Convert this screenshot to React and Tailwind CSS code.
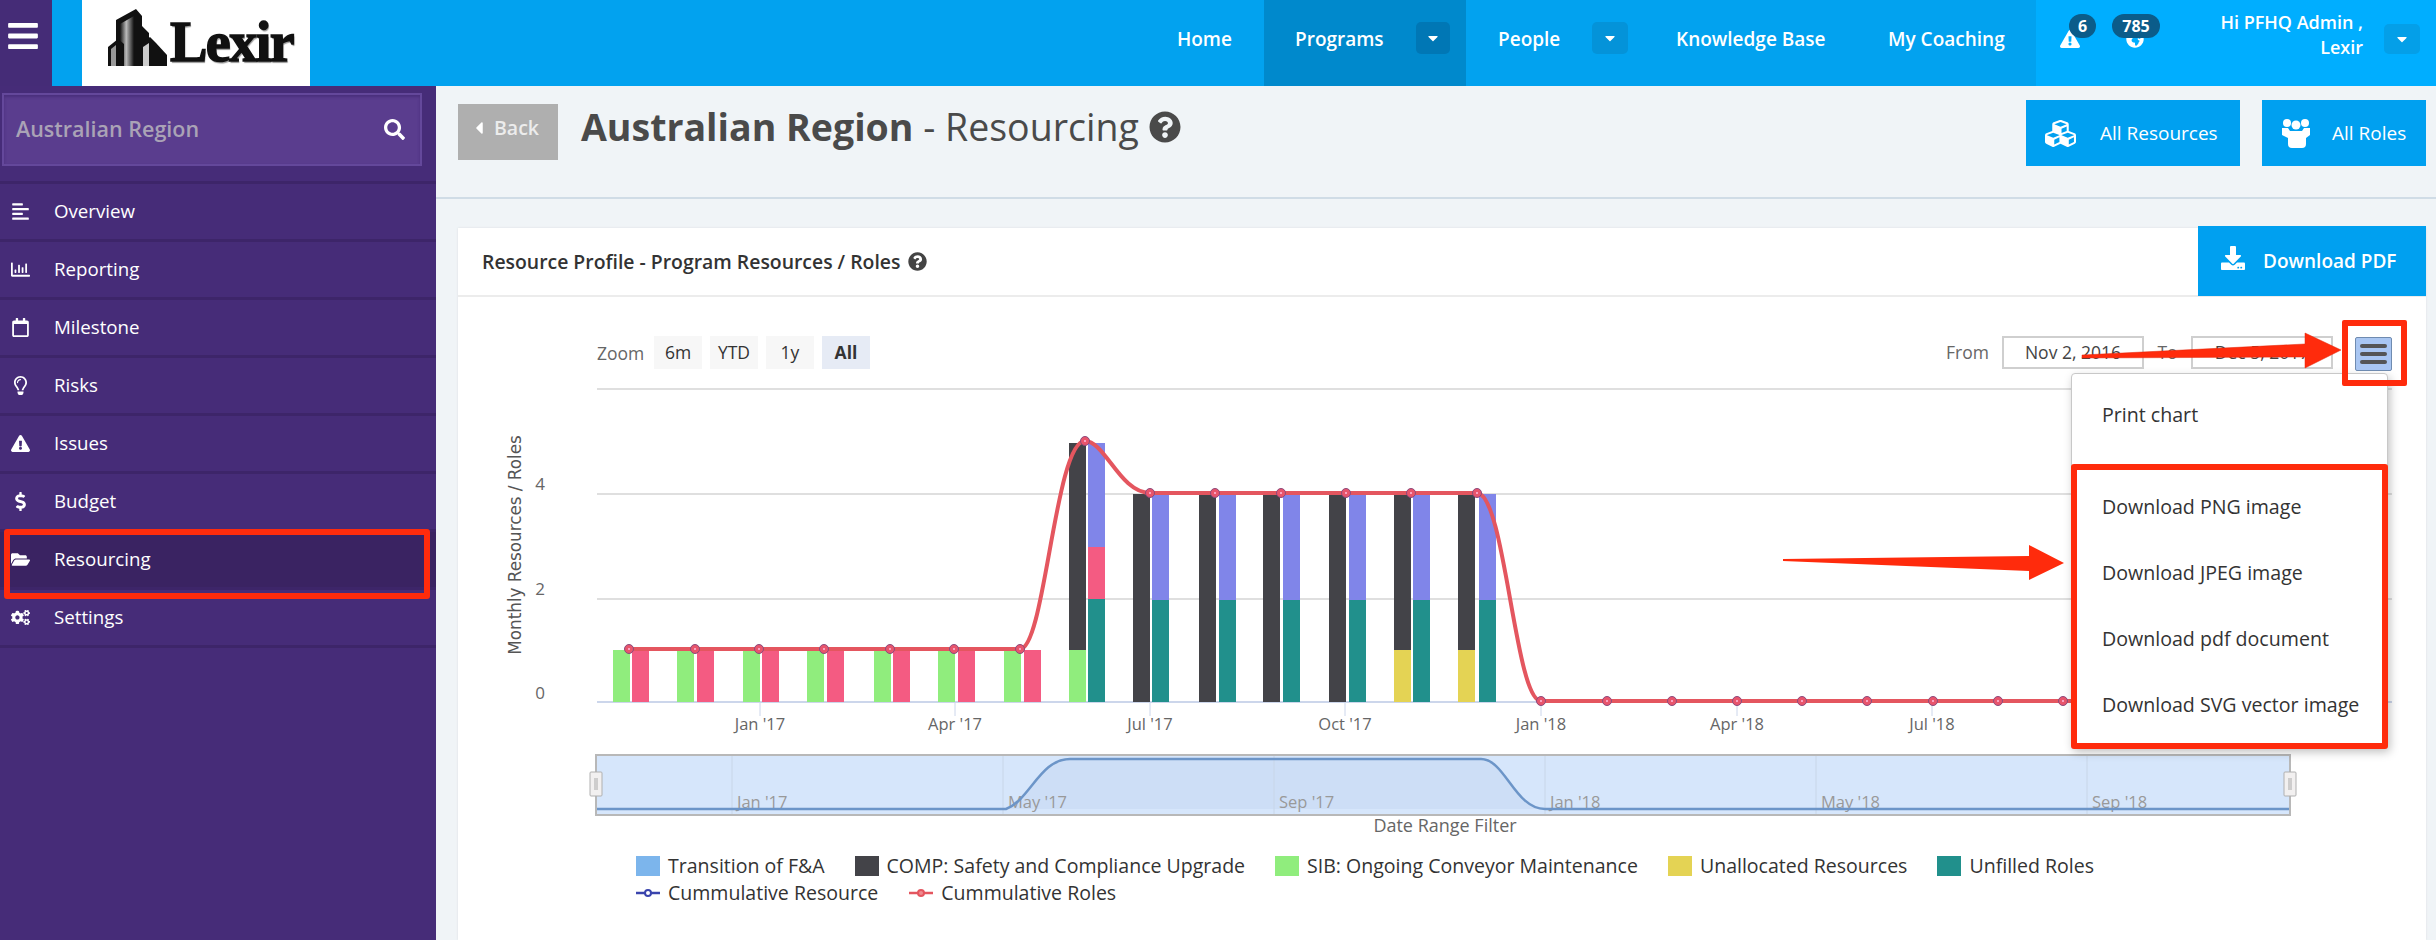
import {
  FaBars, FaAlignLeft, FaRegChartBar, FaRegCalendar, FaRegLightbulb, FaExclamationTriangle,
  FaDollarSign, FaFolderOpen, FaCogs, FaSearch, FaCaretDown, FaCaretLeft, FaQuestionCircle,
  FaCubes, FaDownload, FaGlobeAfrica,
} from 'react-icons/fa';

const NAV = [
  { label: 'Overview', Icon: FaAlignLeft },
  { label: 'Reporting', Icon: FaRegChartBar },
  { label: 'Milestone', Icon: FaRegCalendar },
  { label: 'Risks', Icon: FaRegLightbulb },
  { label: 'Issues', Icon: FaExclamationTriangle },
  { label: 'Budget', Icon: FaDollarSign },
  { label: 'Resourcing', Icon: FaFolderOpen, active: true },
  { label: 'Settings', Icon: FaCogs },
];

const C = { green: '#90ed7d', pink: '#f45b82', dark: '#434348', violet: '#8085e9', teal: '#21908c', yellow: '#e4d354', blue: '#7cb5ec' };

// left x of each bar pair, plus stacks as [colour, y1, y2]
const GREEN_PINK = [[C.green, 650, 702]];
const BARS = [
  { l: 613, r: 632, left: GREEN_PINK, right: [[C.pink, 650, 702]] },
  { l: 677, r: 697, left: GREEN_PINK, right: [[C.pink, 650, 702]] },
  { l: 743, r: 762, left: GREEN_PINK, right: [[C.pink, 650, 702]] },
  { l: 807, r: 827, left: GREEN_PINK, right: [[C.pink, 650, 702]] },
  { l: 874, r: 893, left: GREEN_PINK, right: [[C.pink, 650, 702]] },
  { l: 938, r: 958, left: GREEN_PINK, right: [[C.pink, 650, 702]] },
  { l: 1004, r: 1024, left: GREEN_PINK, right: [[C.pink, 650, 702]] },
  {
    l: 1069, r: 1088,
    left: [[C.green, 650, 702], [C.dark, 443, 650]],
    right: [[C.teal, 599, 702], [C.pink, 547, 599], [C.violet, 443, 547]],
  },
  ...[[1133, 1152], [1199, 1219], [1263, 1283], [1329, 1349]].map(([l, r]) => ({
    l, r,
    left: [[C.dark, 494, 702]],
    right: [[C.teal, 600, 702], [C.violet, 494, 600]],
  })),
  ...[[1394, 1413], [1458, 1479]].map(([l, r]) => ({
    l, r,
    left: [[C.yellow, 650, 702], [C.dark, 494, 650]],
    right: [[C.teal, 600, 702], [C.violet, 494, 600]],
  })),
];

const POINTS = [
  [629, 649], [695, 649], [759, 649], [824, 649], [890, 649], [954, 649], [1020, 649], [1085, 441],
  [1150, 493], [1215, 493], [1281, 493], [1346, 493], [1411, 493], [1477, 493],
  [1541, 701], [1607, 701], [1672, 701], [1737, 701], [1802, 701], [1867, 701], [1933, 701], [1998, 701], [2063, 701],
];

const X_TICKS = [[760, "Jan '17"], [955, "Apr '17"], [1150, "Jul '17"], [1345, "Oct '17"], [1541, "Jan '18"], [1737, "Apr '18"], [1932, "Jul '18"]];
const NAV_TICKS = [[732, "Jan '17"], [1003, "May '17"], [1274, "Sep '17"], [1545, "Jan '18"], [1816, "May '18"], [2087, "Sep '18"]];

const LEGEND = [
  ['Transition of F&A', C.blue],
  ['COMP: Safety and Compliance Upgrade', C.dark],
  ['SIB: Ongoing Conveyor Maintenance', C.green],
  ['Unallocated Resources', C.yellow],
  ['Unfilled Roles', C.teal],
];

const Logo = () => (
  <div className="ml-[30px] w-[228px] h-[86px] bg-white flex items-center relative shrink-0">
    <svg width="62" height="62" viewBox="0 0 62 62" className="ml-[25px] -mt-[14px] shrink-0">
      <defs>
        <linearGradient id="bld" x1="0" x2="1" y1="0" y2="0">
          <stop offset="0" stopColor="#111" />
          <stop offset="0.45" stopColor="#bbb" />
          <stop offset="1" stopColor="#111" />
        </linearGradient>
      </defs>
      <path d="M9 61V15L29 4l6 7v10l7 7v33z" fill="#111" />
      <path d="M13 61V19l14-8v50z" fill="url(#bld)" />
      <path d="M1 61V42l10-8 6 5v22z" fill="#111" />
      <path d="M4 61V44l5-4v21z" fill="#999" />
      <path d="M32 61V40l11-8 6 6 11 12v11z" fill="#111" />
      <path d="M36 61V42l6-4v23z" fill="#ccc" />
    </svg>
    <span className="absolute left-[88px] top-[12px] text-[56px] leading-[60px] font-black text-[#111] tracking-[-1.5px] [-webkit-text-stroke:1.5px_#111] [text-shadow:1px_2px_1px_#999] font-['Liberation_Serif',serif]">Lexir</span>
  </div>
);

const CaretBox = ({ className }) => (
  <span className={`flex items-center justify-center rounded-[5px] ${className}`}>
    <FaCaretDown className="text-white text-[16px]" />
  </span>
);

const RolesIcon = () => (
  <svg width="28" height="30" viewBox="0 0 28 30" fill="currentColor" className="shrink-0">
    <circle cx="5" cy="5" r="4" />
    <circle cx="23" cy="5" r="4" />
    <circle cx="14" cy="7" r="4.5" />
    <path d="M0 10h6l2 3h12l2-3h6v7l-4 3v6q0 4-4 4H10q-4 0-4-4v-6l-6-3z" />
  </svg>
);

const Topbar = () => (
  <header className="h-[86px] flex bg-[#02a2ef] text-white text-[19px] font-semibold">
    <div className="w-[52px] bg-[#452c77] flex items-center justify-center pb-[14px] pr-[6px]">
      <FaBars className="text-[34px]" />
    </div>
    <Logo />
    <nav className="flex-1 flex justify-end">
      <a className="w-[120px] pl-[33px] pb-[7px] flex items-center">Home</a>
      <a className="w-[202px] pl-[31px] pb-[7px] flex items-center bg-[#0089cc] relative">
        Programs
        <CaretBox className="absolute left-[152px] top-[22px] w-[34px] h-[32px] bg-[#0077b5]" />
      </a>
      <a className="w-[210px] pl-[32px] pb-[7px] flex items-center relative">
        People
        <CaretBox className="absolute left-[126px] top-[22px] w-[36px] h-[32px] bg-[#0493d9]" />
      </a>
      <a className="w-[212px] pb-[7px] flex items-center">Knowledge Base</a>
      <a className="w-[148px] pb-[7px] flex items-center">My Coaching</a>
    </nav>
    <div className="w-[400px] bg-[#00aeff] flex items-center">
      <div className="relative ml-[24px] w-[40px] h-[86px]">
        <FaExclamationTriangle className="absolute left-0 top-[29px] text-[20px]" />
        <span className="absolute left-[9px] top-[14px] w-[27px] h-[24px] rounded-full bg-[#0b5c8a] flex items-center justify-center text-[16px] font-bold">6</span>
      </div>
      <div className="relative ml-[12px] w-[48px] h-[86px]">
        <FaGlobeAfrica className="absolute left-[14px] top-[30px] text-[18px]" />
        <span className="absolute left-0 top-[14px] w-[48px] h-[24px] rounded-full bg-[#0b5c8a] flex items-center justify-center text-[16px] font-bold">785</span>
      </div>
      <div className="ml-auto text-right text-[18px] leading-[25px] -mt-[16px]">
        Hi PFHQ Admin ,<br />Lexir
      </div>
      <CaretBox className="ml-[21px] mr-[16px] -mt-[8px] w-[36px] h-[30px] bg-[#049fe8]" />
    </div>
  </header>
);

const Sidebar = () => (
  <aside className="w-[436px] bg-[#462c78] text-white shrink-0">
    <div className="h-[98px] border-b-[3px] border-[#3d2569] pt-[7px] pl-[2px]">
      <div className="w-[420px] h-[73px] bg-[#5a3d8e] border-2 border-[#64489b] shadow-[inset_0_2px_3px_#4a2f7c] flex items-center justify-between pl-[12px] pr-[15px]">
        <span className="text-[21.5px] font-semibold text-[#aaa3b6]">Australian Region</span>
        <FaSearch className="text-[21px]" />
      </div>
    </div>
    {NAV.map(({ label, Icon, active }) => (
      <div
        key={label}
        className={`relative h-[58px] flex items-center border-b-[3px] border-[#3d2569] text-[18.7px] ${active ? 'bg-[#3a2362]' : ''}`}
      >
        <span className="w-[54px] pl-[11px] shrink-0"><Icon className="text-[19px]" /></span>
        {label}
        {active && <span className="absolute left-[4px] -top-[3px] w-[426px] h-[70px] border-[6px] border-[#ff2b0c] rounded-[3px]" />}
      </div>
    ))}
  </aside>
);

const ChartSvg = () => (
  <svg width="1968" height="474" viewBox="458 372 1968 474" className="block">
    {/* grid */}
    {[389, 494, 599].map((y) => <line key={y} x1="597" x2="2392" y1={y} y2={y} stroke="#dfdfdf" strokeWidth="2" />)}
    <line x1="597" x2="2392" y1="702" y2="702" stroke="#ccd6eb" strokeWidth="2" />
    {X_TICKS.map(([x, t]) => (
      <g key={t}>
        <line x1={x} x2={x} y1="702" y2="716" stroke="#ccd6eb" />
        <text x={x} y="730" textAnchor="middle" fontSize="16.5" fill="#666">{t}</text>
      </g>
    ))}
    {[[484, '4'], [589, '2'], [693, '0']].map(([y, t]) => (
      <text key={t} x="540" y={y + 6} textAnchor="middle" fontSize="17" fill="#666">{t}</text>
    ))}
    <text transform="translate(521 545) rotate(-90)" textAnchor="middle" fontSize="16.8" fill="#555" fontFamily="DejaVu Sans, sans-serif">Monthly Resources / Roles</text>

    {/* bars */}
    {BARS.map((b) => (
      <g key={b.l}>
        {b.left.map(([c, y1, y2]) => <rect key={c} x={b.l} y={y1} width="17" height={y2 - y1} fill={c} />)}
        {b.right.map(([c, y1, y2]) => <rect key={c} x={b.r} y={y1} width="17" height={y2 - y1} fill={c} />)}
      </g>
    ))}

    {/* cumulative line */}
    <path
      d="M629 649L1020 649C1045 649 1055 441 1085 441C1105 441 1120 493 1150 493L1477 493C1505 493 1515 701 1541 701L2128 701"
      fill="none" stroke="#e4565f" strokeWidth="4"
    />
    {POINTS.map(([x, y]) => (
      <g key={x}>
        <circle cx={x} cy={y} r="4.5" fill="#e8556c" stroke="#8c4a7c" strokeWidth="1" />
        <circle cx={x} cy={y} r="1" fill="#fbd" />
      </g>
    ))}

    {/* range navigator */}
    <rect x="596" y="755" width="1694" height="60" fill="#d6e6fb" stroke="#b8b8b8" strokeWidth="2" />
    <path d="M1006 809C1030 800 1040 759 1070 759L1481 759C1505 759 1515 809 1545 809Z" fill="#cddef6" />
    {NAV_TICKS.map(([x, t]) => (
      <g key={x}>
        <line x1={x} x2={x} y1="756" y2="814" stroke="#c8d6e8" />
        <text x={x + 5} y="808" fontSize="16.5" fill="#999">{t}</text>
      </g>
    ))}
    <path d="M597 809L1006 809C1030 800 1040 759 1070 759L1481 759C1505 759 1515 809 1545 809L2289 809" fill="none" stroke="#6c95c8" strokeWidth="2.5" />
    {[590, 2284].map((x) => (
      <g key={x}>
        <rect x={x} y="772" width="12" height="24" rx="1" fill="#f2f0f0" stroke="#b0b0b0" />
        <line x1={x + 5} x2={x + 5} y1="778" y2="790" stroke="#aaa" />
        <line x1={x + 7} x2={x + 7} y1="778" y2="790" stroke="#aaa" />
      </g>
    ))}
    <text x="1445" y="832" textAnchor="middle" fontSize="18" fill="#666">Date Range Filter</text>
  </svg>
);

const RangeBtn = ({ children, active }) => (
  <span className={`w-[48px] h-[33px] flex items-center justify-center text-[17.5px] ${active ? 'bg-[#e6ebf5] text-[#333] font-bold' : 'bg-[#f7f7f7] text-[#333]'}`}>
    {children}
  </span>
);

const DateBox = ({ children }) => (
  <span className="w-[142px] h-[33px] border-2 border-[#cfcfcf] flex items-center justify-center text-[17.5px] text-[#444]">{children}</span>
);

const LegendLine = ({ color, label }) => (
  <span className="flex items-center gap-[8px]">
    <svg width="24" height="12" viewBox="0 0 24 12">
      <line x1="0" x2="24" y1="6" y2="6" stroke={color} strokeWidth="2.5" />
      <circle cx="12" cy="6" r="3" fill={color === '#3a44ad' ? '#fff' : '#f08a90'} stroke={color} strokeWidth="2" />
    </svg>
    {label}
  </span>
);

const Card = () => (
  <section className="mt-[29px] ml-[22px] mr-[10px] flex-1 bg-white shadow-[0_0_2px_#d8dde2]">
    <div className="h-[69px] flex items-center border-b-2 border-[#ececec] pl-[24px]">
      <h2 className="text-[19.4px] font-semibold text-[#333]">Resource Profile - Program Resources / Roles</h2>
      <FaQuestionCircle className="ml-[8px] text-[19px] text-[#444]" />
      <button className="ml-auto -mt-[1px] w-[228px] h-[70px] bg-[#00a0f0] text-white text-[19px] font-semibold flex items-center pl-[23px] gap-[18px]">
        <FaDownload className="text-[24px] -mt-[6px]" /> Download PDF
      </button>
    </div>
    <div className="flex items-center h-[33px] mt-[39px] pl-[139px] text-[#666]">
      <span className="text-[17.5px] w-[57px] mt-[2px]">Zoom</span>
      <div className="flex gap-[8px]">
        <RangeBtn>6m</RangeBtn>
        <RangeBtn>YTD</RangeBtn>
        <RangeBtn>1y</RangeBtn>
        <RangeBtn active>All</RangeBtn>
      </div>
      <span className="ml-[1076px] text-[17.5px] w-[56px]">From</span>
      <DateBox>Nov 2, 2016</DateBox>
      <span className="text-[17.5px] w-[47px] text-center">To</span>
      <DateBox>Dec 5, 2017</DateBox>
    </div>
    <div className="mt-[3px]"><ChartSvg /></div>
    <div className="mt-[6px] pl-[178px] text-[19.55px] text-[#333]">
      <div className="flex gap-[30px] h-[27px] items-center">
        {LEGEND.map(([label, color]) => (
          <span key={label} className="flex items-center gap-[8px]">
            <span className="w-[24px] h-[20px]" style={{ background: color }} />
            {label}
          </span>
        ))}
      </div>
      <div className="flex gap-[31px] h-[27px] items-center">
        <LegendLine color="#3a44ad" label="Cummulative Resource" />
        <LegendLine color="#e4565f" label="Cummulative Roles" />
      </div>
    </div>
  </section>
);

const Main = () => (
  <main className="flex-1 flex flex-col bg-[#f0f4f7] min-w-0">
    <div className="h-[113px] flex border-b-2 border-[#d0dce6] pl-[22px]">
      <button className="mt-[18px] w-[100px] h-[56px] bg-[#afafaf] text-[#ececec] text-[19.5px] font-semibold flex items-center pl-[11px] gap-[5px] pb-[8px]">
        <FaCaretLeft className="text-[20px] text-white" /> Back
      </button>
      <h1 className="ml-[23px] mt-[16px] h-[50px] flex items-center text-[37.5px] text-[#4a4a4a]">
        <b className="font-bold">Australian Region</b>&nbsp;- Resourcing
        <FaQuestionCircle className="ml-[10px] text-[32px]" />
      </h1>
      <div className="ml-auto mr-[10px] mt-[14px] flex gap-[22px] text-white text-[19px]">
        <button className="w-[214px] h-[66px] bg-[#00a0f0] flex items-center pl-[19px] gap-[24px]">
          <FaCubes className="text-[31px]" /> All Resources
        </button>
        <button className="w-[164px] h-[66px] bg-[#00a0f0] flex items-center pl-[20px] gap-[22px]">
          <RolesIcon /> All Roles
        </button>
      </div>
    </div>
    <Card />
  </main>
);

// chart's export menu, open and outlined for the screenshot
const ExportMenu = () => (
  <div className="absolute left-[2071px] top-[373px] w-[317px] h-[375px] bg-white rounded-[4px] border border-[#c8c8c8] shadow-[2px_4px_10px_rgba(0,0,0,0.25)] text-[19.6px] text-[#333]">
    <div className="h-[83px] pl-[30px] pt-[27px] leading-[28px]">Print chart</div>
    <div className="absolute -left-px top-[90px] w-[317px] h-[285px] border-[6px] border-[#ff2b0c] rounded-[3px] pl-[25px] pt-[4px]">
      {['Download PNG image', 'Download JPEG image', 'Download pdf document', 'Download SVG vector image'].map((t) => (
        <div key={t} className="h-[66px] leading-[66px]">{t}</div>
      ))}
    </div>
  </div>
);

const Arrows = () => (
  <>
    <div className="absolute left-[2355px] top-[337px] w-[37px] h-[34px] bg-[#a9c6f2] border border-[#6f8bb0] rounded-[2px] flex flex-col items-center justify-center gap-[4px]">
      <span className="w-[27px] h-[4px] rounded-full bg-[#555]" />
      <span className="w-[27px] h-[4px] rounded-full bg-[#555]" />
      <span className="w-[27px] h-[4px] rounded-full bg-[#555]" />
    </div>
    <div className="absolute left-[2342px] top-[320px] w-[65px] h-[66px] border-[6px] border-[#ff2b0c] rounded-[2px]" />
    <svg width="2436" height="940" viewBox="0 0 2436 940" className="absolute left-0 top-0 pointer-events-none">
      <path d="M2082 355L2305 344V333L2341 350L2305 368V357L2082 358Z" fill="#ff2b0c" stroke="#e02408" strokeWidth="0.5" />
      <path d="M1783 559L2029 556V545L2064 563L2029 580V571L1783 561Z" fill="#ff2b0c" />
    </svg>
  </>
);

export default function App() {
  return (
    <div className="relative w-[2436px] h-[940px] overflow-hidden flex flex-col bg-[#f0f4f7] font-['Open_Sans','Noto_Sans',sans-serif]">
      <Topbar />
      <div className="flex-1 flex min-h-0">
        <Sidebar />
        <Main />
      </div>
      <ExportMenu />
      <Arrows />
    </div>
  );
}
